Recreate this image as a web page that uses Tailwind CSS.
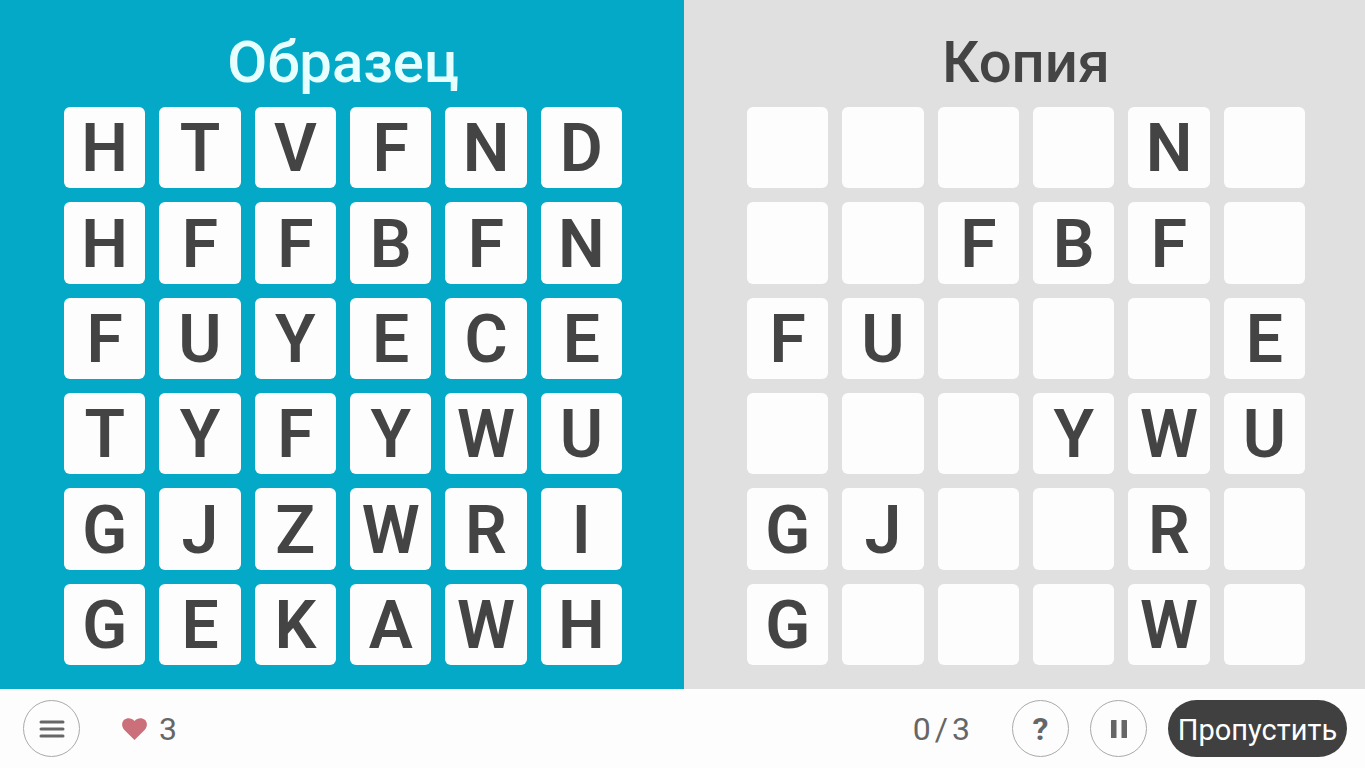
<!DOCTYPE html>
<html lang="ru">
<head>
  <meta charset="UTF-8" />
  <meta name="viewport" content="width=device-width, initial-scale=1" />
  <title>Образец и копия</title>
  <script src="https://cdn.jsdelivr.net/npm/@tailwindcss/browser@4"></script>
</head>
<body class="min-h-screen flex flex-col bg-[#fdfdfd] font-['Roboto','Noto_Sans',sans-serif] text-[#444444]">
  <main class="flex-1 grid grid-cols-[684fr_681fr]">
    <section class="bg-[#04a9c7] pt-8 pb-6 pl-[63px] pr-[61px]">
      <h1 class="h-[75px] text-center text-[58px] leading-[60px] font-medium text-[#e8ffff]">Образец</h1>
      <div id="sample" class="grid grid-cols-6 gap-[14px] max-w-[558px] mx-auto"></div>
    </section>

    <section class="bg-[#e0e0e0] pt-8 pb-6 pl-[63px] pr-[60px]">
      <h2 class="h-[75px] text-center text-[58px] leading-[60px] font-medium">Копия</h2>
      <div id="copy" class="grid grid-cols-6 gap-[14px] max-w-[558px] mx-auto"></div>
    </section>
  </main>

  <footer class="flex items-center h-[79px] pl-[23px] pr-[18px] text-[32px] text-[#666666]">
    <button type="button" aria-label="Меню" class="flex items-center justify-center size-[57px] rounded-full border border-[#aaaaaa]">
      <svg class="w-7 h-5" viewBox="0 0 28 20" fill="none" stroke="currentColor" stroke-width="3" stroke-linecap="round">
        <path d="M3 3h22M3 10h22M3 17h22" />
      </svg>
    </button>

    <div class="flex items-center gap-3 ml-[42px]">
      <svg class="w-[25px] h-[22px] text-[#cb6f7b]" viewBox="0 0 25 22" fill="currentColor">
        <path d="M12.5 22 2.4 11.9C-.6 8.9-.6 4.3 2.1 1.8 5-.7 9.6-.4 12.5 3 15.4-.4 20-.7 22.9 1.8 25.6 4.3 25.6 8.9 22.6 11.9Z" />
      </svg>
      <span>3</span>
    </div>

    <div class="flex gap-1 ml-auto mr-[42px]">
      <span>0</span><span>/</span><span>3</span>
    </div>

    <div class="flex items-center gap-[21px]">
      <button type="button" aria-label="Помощь" class="flex items-center justify-center size-[57px] rounded-full border border-[#aaaaaa] font-bold">?</button>
      <button type="button" aria-label="Пауза" class="flex items-center justify-center size-[57px] rounded-full border border-[#aaaaaa]">
        <svg class="w-4 h-[18px]" viewBox="0 0 16 18" fill="currentColor">
          <rect x="0" y="0" width="5.5" height="18" rx="0.5" />
          <rect x="10.500" y="0" width="5.5" height="18" rx="0.5" />
        </svg>
      </button>
      <button type="button" class="h-[57px] w-[179px] pt-1 rounded-full bg-[#404040] text-[29px] text-white">Пропустить</button>
    </div>
  </footer>

  <script>
    const sampleRows = ["HTVFND", "HFFBFN", "FUYECE", "TYFYWU", "GJZWRI", "GEKAWH"];
    const copyRows = ["    N ", "  FBF ", "FU   E", "   YWU", "GJ  R ", "G   W "];

    const cellClass = "flex items-center justify-center aspect-square pt-[3px] rounded-[6px] bg-[#fdfdfd] text-[66px] leading-[66px] font-semibold";

    function fillGrid(id, rows, tag) {
      const grid = document.getElementById(id);
      rows.forEach((row, r) => {
        [...row].forEach((letter, c) => {
          const cell = document.createElement(tag);
          cell.className = cellClass;
          cell.textContent = letter.trim();
          if (tag === "button") {
            cell.type = "button";
            cell.setAttribute("aria-label", `Ряд ${r + 1}, столбец ${c + 1}: ${letter.trim() || "пусто"}`);
          }
          grid.appendChild(cell);
        });
      });
    }

    fillGrid("sample", sampleRows, "div");
    fillGrid("copy", copyRows, "button");
  </script>
</body>
</html>
